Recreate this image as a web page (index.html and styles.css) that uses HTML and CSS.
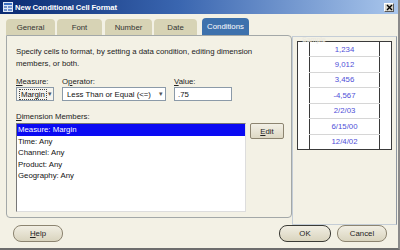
FILE: index.html
```html
<!DOCTYPE html>
<html lang="en">
<head>
    <meta charset="UTF-8">
    <title>New Conditional Cell Format</title>
    <link rel="stylesheet" href="styles.css">
</head>
<body>
    <div class="window">
        <div class="titlebar">
            <span class="app-icon">
                <svg width="10" height="10" viewBox="0 0 10 10">
                    <rect x="0" y="0" width="10" height="10" fill="#dfe8f6"/>
                    <rect x="1" y="1" width="8" height="2" fill="#3a6fc4"/>
                    <rect x="1" y="4" width="3" height="2" fill="#6f93d0"/>
                    <rect x="5" y="4" width="4" height="2" fill="#6f93d0"/>
                    <rect x="1" y="7" width="3" height="2" fill="#6f93d0"/>
                    <rect x="5" y="7" width="4" height="2" fill="#6f93d0"/>
                </svg>
            </span>
            <span class="title">New Conditional Cell Format</span>
            <span class="close">
                <svg width="7" height="7" viewBox="0 0 7 7">
                    <path d="M1 1 L6 6 M6 1 L1 6" stroke="#000" stroke-width="1.4"/>
                </svg>
            </span>
        </div>

        <div class="main">
            <div class="left">
                <div class="tabs">
                    <div class="tab tab-general">General</div>
                    <div class="tab tab-font">Font</div>
                    <div class="tab tab-number">Number</div>
                    <div class="tab tab-date">Date</div>
                    <div class="tab tab-conditions active">Conditions</div>
                </div>
                <div class="panel">
                    <p class="intro">Specify cells to format, by setting a data condition, editing dimension members, or both.</p>

                    <div class="fields">
                        <div class="field">
                            <label><u>M</u>easure:</label>
                            <div class="select select-measure"><span class="focus">Margin</span><span class="arrow">&#9662;</span></div>
                        </div>
                        <div class="field">
                            <label>O<u>p</u>erator:</label>
                            <div class="select select-operator"><span>Less Than or Equal (&lt;=)</span><span class="arrow">&#9662;</span></div>
                        </div>
                        <div class="field">
                            <label><u>V</u>alue:</label>
                            <div class="input">.75</div>
                        </div>
                    </div>

                    <label class="list-label"><u>D</u>imension Members:</label>
                    <div class="list-row">
                        <ul class="listbox">
                            <li class="selected">Measure: Margin</li>
                            <li>Time: Any</li>
                            <li>Channel: Any</li>
                            <li>Product: Any</li>
                            <li>Geography: Any</li>
                        </ul>
                        <button class="btn btn-edit"><u>E</u>dit</button>
                    </div>
                </div>
            </div>

            <div class="sample">
                <div class="sample-label">Sample</div>
                <div class="sample-box">
                    <table class="sample-table">
                        <tr><td>1,234</td></tr>
                        <tr><td>9,012</td></tr>
                        <tr><td>3,456</td></tr>
                        <tr><td>-4,567</td></tr>
                        <tr><td>2/2/03</td></tr>
                        <tr><td>6/15/00</td></tr>
                        <tr><td>12/4/02</td></tr>
                    </table>
                </div>
            </div>
        </div>

        <div class="footer">
            <button class="btn btn-help"><u>H</u>elp</button>
            <div class="spacer"></div>
            <button class="btn btn-ok">OK</button>
            <button class="btn btn-cancel">Cancel</button>
        </div>
    </div>
</body>
</html>
```

FILE: styles.css
```css
* {
    box-sizing: border-box;
    margin: 0;
    padding: 0;
    font-family: "Liberation Sans", Arial, sans-serif;
}

body {
    background-color: #f3f1e5;
    width: 400px;
    height: 250px;
    overflow: hidden;
}

.window {
    width: 400px;
    height: 250px;
    background-color: #f3f1e5;
    border-bottom: 2px solid #6d6d6d;
    border-right: 2px solid #8a8a8a;
    display: flex;
    flex-direction: column;
}

.titlebar {
    height: 14px;
    display: flex;
    align-items: center;
    padding: 0 4px 0 3px;
    background: linear-gradient(to right, #0a2a72 0%, #3a66b0 45%, #a9c6ec 100%);
}

.app-icon {
    display: flex;
    width: 10px;
    height: 10px;
    margin-right: 2px;
}

.title {
    color: #fff;
    font-size: 7.7px;
    font-weight: bold;
    flex: 1;
    letter-spacing: -0.1px;
}

.close {
    width: 10px;
    height: 9px;
    background-color: #d8d6cc;
    border: 1px solid #fff;
    border-right-color: #5a5a5a;
    border-bottom-color: #5a5a5a;
    display: flex;
    align-items: center;
    justify-content: center;
}

.main {
    display: flex;
    align-items: flex-start;
    padding: 4px 0 0 6px;
    height: 204px;
}

.left {
    width: 286px;
    display: flex;
    flex-direction: column;
}

.tabs {
    display: flex;
    height: 17px;
    align-items: flex-end;
}

.tab {
    height: 16px;
    background-color: #d7d3b5;
    border-radius: 4px 4px 0 0;
    font-size: 7.8px;
    color: #333;
    display: flex;
    align-items: center;
    justify-content: center;
    margin-right: 2px;
}

.tab-general { width: 49px; }
.tab-font { width: 45px; margin-right: 3px; }
.tab-number { width: 47px; }
.tab-date { width: 43px; margin-right: 5px; }
.tab-conditions { width: 47px; }

.tab.active {
    height: 17px;
    background-color: #3d71ad;
    color: #fff;
}

.panel {
    height: 183px;
    border: 1px solid #a3a8a8;
    border-radius: 0 4px 4px 4px;
    padding: 10px 0 0 9px;
}

.intro {
    font-size: 7.8px;
    line-height: 12px;
    color: #222;
    width: 250px;
}

.fields {
    display: flex;
    margin-top: 6px;
}

.field {
    display: flex;
    flex-direction: column;
    margin-right: 8px;
}

label {
    font-size: 7.8px;
    color: #222;
    line-height: 11px;
}

.select, .input {
    height: 14px;
    border: 1px solid #8b9aa8;
    background-color: #fff;
    font-size: 7.8px;
    display: flex;
    align-items: center;
    padding-left: 2px;
    color: #111;
}

.select-measure {
    width: 38px;
    background-color: #f5f4ee;
}

.select-operator {
    width: 104px;
    padding-left: 4px;
}

.input {
    width: 58px;
    padding-left: 3px;
}

.focus {
    border: 1px dotted #444;
    padding: 0 1px;
    line-height: 9px;
}

.arrow {
    margin-left: auto;
    width: 9px;
    text-align: center;
    font-size: 7px;
    color: #555;
}

.list-label {
    display: block;
    margin-top: 10px;
}

.list-row {
    display: flex;
    align-items: flex-start;
    margin-top: 1px;
}

.listbox {
    list-style: none;
    width: 230px;
    height: 89px;
    background-color: #fff;
    border-left: 1px solid #777;
    border-top: 1px solid #777;
    border-right: 1px solid #ddd;
    border-bottom: 1px solid #ddd;
}

.listbox li {
    font-size: 7.8px;
    line-height: 11.5px;
    color: #111;
    padding-left: 1px;
}

.listbox li.selected {
    background-color: #0a0af2;
    color: #fff;
}

.btn {
    font-size: 7.8px;
    color: #222;
    background: linear-gradient(to bottom, #f2f0e6, #ddd8c4);
    border: 1px solid #8c8470;
    border-radius: 4px;
    height: 17px;
}

.btn-edit {
    width: 34px;
    height: 16px;
    margin-left: 4px;
    border-radius: 2px;
}

.sample {
    width: 105px;
    height: 189px;
    margin-top: 18px;
    border: 1px solid #c4cdd6;
    border-right-color: #8d96a0;
    padding: 0 4px;
    position: relative;
}

.sample-label {
    position: absolute;
    top: -1px;
    left: 9px;
    font-size: 7px;
    color: #e9e7dd;
}

.sample-box {
    margin-top: 4px;
    height: 109px;
    background-color: #fff;
    border: 1px solid #3a3a3a;
    display: flex;
    justify-content: center;
}

.sample-table {
    width: 71px;
    height: 107px;
    border-collapse: collapse;
    border-left: 1px solid #3a3a3a;
    border-right: 1px solid #3a3a3a;
}

.sample-table td {
    font-size: 7.8px;
    color: #4f4fd8;
    text-align: center;
    border-bottom: 1px solid #d6d6d6;
    padding: 0;
}

.sample-table tr:last-child td {
    border-bottom: none;
}

.footer {
    display: flex;
    align-items: flex-start;
    padding: 7px 11px 0 13px;
    flex: 1;
}

.spacer {
    flex: 1;
}

.footer .btn {
    height: 17px;
    border-radius: 8px;
    background: linear-gradient(to bottom, #f1eee3, #d9d4be);
}

.btn-help { width: 50px; }
.btn-ok { width: 52px; margin-right: 6px; border-color: #3b3b35; }
.btn-cancel { width: 50px; }
```
